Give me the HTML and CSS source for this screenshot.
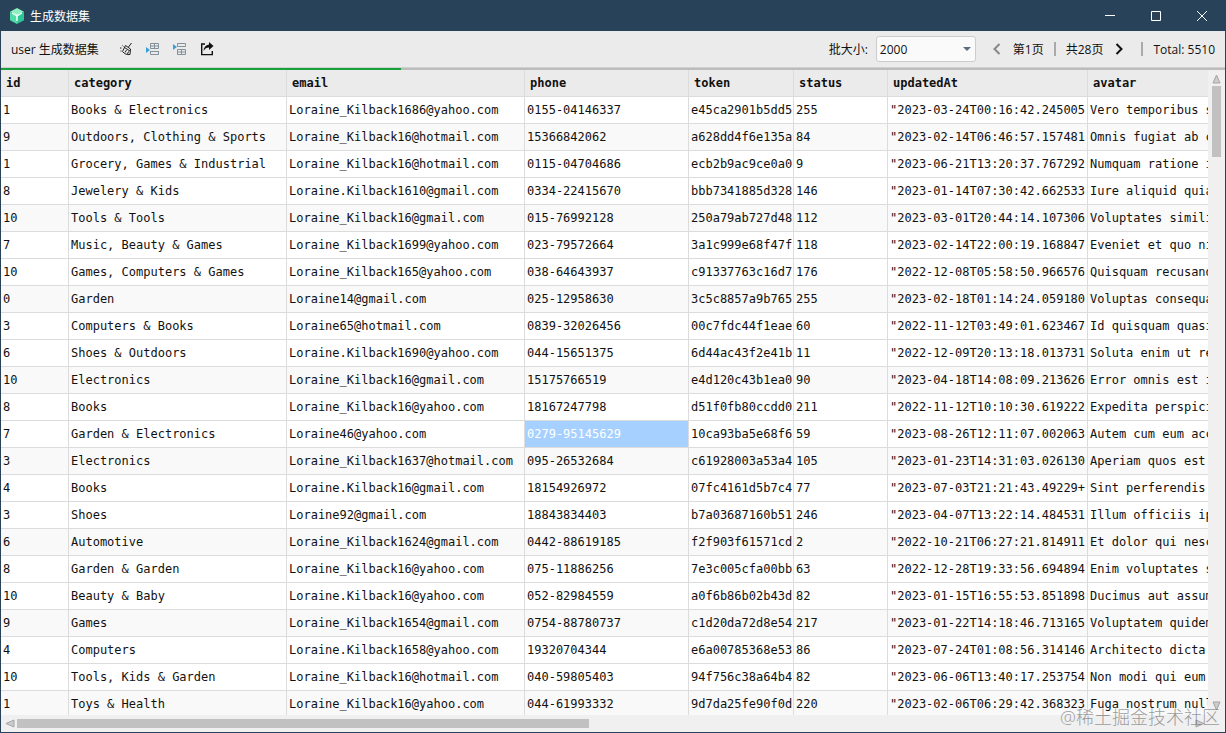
FILE: index.html
```html
<!DOCTYPE html>
<html lang="zh-CN">
<head>
    <meta charset="UTF-8">
    <title>生成数据集</title>
    <link rel="stylesheet" href="styles.css">
</head>
<body>

    <div class="window">
        <header class="titlebar">
            <svg class="logo" viewBox="0 0 16 16">
                <path fill="#8df0c0" d="M8 0l7 3.800L8 8 1 3.800z"/>
                <path fill="#4fdca6" d="M1 3.800L8 8v8l-7-3.800z"/>
                <path fill="#2fc596" d="M15 3.800L8 8v8l7-3.800z"/>
                <path fill="#ecfff6" d="M3 4.500l5 2.200 5-2.200v1.300L8.800 8.200V13H7.200V8.200L3 5.800z"/>
            </svg>
            <h1>生成数据集</h1>
            <div class="window-buttons">
                <button type="button" aria-label="最小化"><svg viewBox="0 0 12 12"><path d="M1 5.500h10"/></svg></button>
                <button type="button" aria-label="最大化"><svg viewBox="0 0 12 12"><path d="M1.500 1.500h9v9h-9z"/></svg></button>
                <button type="button" aria-label="关闭"><svg viewBox="0 0 12 12"><path d="M1 1l10 10M11 1L1 11"/></svg></button>
            </div>
        </header>

        <div class="toolbar">
            <span class="table-name">user 生成数据集</span>
            <div class="actions">
                <button type="button" aria-label="清空">
                    <svg viewBox="0 0 14 14" fill="none" stroke="#222"><path d="M12.500 1L9.500 5M6.500 3.500l5 3.500-.5 5.500c-3 .5-5.500-.5-7.500-3zM5.500 5.500l5.500 3.500M6 10.500L7.500 8M8.500 12l1-2.500M1 6h1.500M1.500 9h1M3.500 3.500l1 1"/></svg>
                </button>
                <button type="button" aria-label="在上方插入行">
                    <svg viewBox="0 0 14 14" fill="none" stroke="#84909a"><path d="M4.500 1.500h8v5h-8zM8.500 1.500v5M4.500 4h8M4.500 9v3.500h8V9M4.500 9.500h8"/><path fill="#389fd6" stroke="none" d="M0 5l4 3-4 3z"/></svg>
                </button>
                <button type="button" aria-label="在下方插入行">
                    <svg viewBox="0 0 14 14" fill="none" stroke="#84909a"><path d="M4.500 1.500h8v3h-8zM4.500 7.500h8v5h-8zM8.500 7.500v5M4.500 10h8"/><path fill="#389fd6" stroke="none" d="M0 2l4 3-4 3z"/></svg>
                </button>
                <button type="button" aria-label="导出">
                    <svg viewBox="0 0 14 14" fill="none" stroke="#111" stroke-width="1.400"><path d="M5 2H1.700v10.600h10.600V9"/><path fill="#111" stroke="none" d="M9 0l4.500 4L9 8V5.500C6.500 5.500 5 6.500 3.500 9 3.700 5.500 5.500 3 9 2.500z"/></svg>
                </button>
            </div>
            <div class="pager">
                <label for="batch">批大小:</label>
                <div class="select-box">
                    <select id="batch">
                        <option>2000</option>
                    </select>
                </div>
                <button type="button" class="prev" aria-label="上一页"><svg viewBox="0 0 10 12"><path d="M7.500 1L2.500 6l5 5"/></svg></button>
                <span>第1页</span>
                <i class="divider"></i>
                <span>共28页</span>
                <button type="button" class="next" aria-label="下一页"><svg viewBox="0 0 10 12"><path d="M2.500 1l5 5-5 5"/></svg></button>
                <i class="divider"></i>
                <span>Total: 5510</span>
            </div>
        </div>

        <div class="progress"><div class="progress-bar"></div></div>

        <div class="main">
            <div class="table-wrap">
                <table>
                    <colgroup>
                        <col class="c-id"><col class="c-category"><col class="c-email"><col class="c-phone"><col class="c-token"><col class="c-status"><col class="c-updated"><col>
                    </colgroup>
                    <thead>
                        <tr><th>id</th><th>category</th><th>email</th><th>phone</th><th>token</th><th>status</th><th>updatedAt</th><th>avatar</th></tr>
                    </thead>
                    <tbody>
                        <tr><td>1</td><td>Books &amp; Electronics</td><td>Loraine_Kilback1686@yahoo.com</td><td>0155-04146337</td><td>e45ca2901b5dd5</td><td>255</td><td>"2023-03-24T00:16:42.245005</td><td>Vero temporibus s</td></tr>
                        <tr><td>9</td><td>Outdoors, Clothing &amp; Sports</td><td>Loraine_Kilback16@hotmail.com</td><td>15366842062</td><td>a628dd4f6e135a</td><td>84</td><td>"2023-02-14T06:46:57.157481</td><td>Omnis fugiat ab c</td></tr>
                        <tr><td>1</td><td>Grocery, Games &amp; Industrial</td><td>Loraine_Kilback16@hotmail.com</td><td>0115-04704686</td><td>ecb2b9ac9ce0a0</td><td>9</td><td>"2023-06-21T13:20:37.767292</td><td>Numquam ratione i</td></tr>
                        <tr><td>8</td><td>Jewelery &amp; Kids</td><td>Loraine.Kilback1610@gmail.com</td><td>0334-22415670</td><td>bbb7341885d328</td><td>146</td><td>"2023-01-14T07:30:42.662533</td><td>Iure aliquid quia</td></tr>
                        <tr><td>10</td><td>Tools &amp; Tools</td><td>Loraine_Kilback16@gmail.com</td><td>015-76992128</td><td>250a79ab727d48</td><td>112</td><td>"2023-03-01T20:44:14.107306</td><td>Voluptates simili</td></tr>
                        <tr><td>7</td><td>Music, Beauty &amp; Games</td><td>Loraine_Kilback1699@yahoo.com</td><td>023-79572664</td><td>3a1c999e68f47f</td><td>118</td><td>"2023-02-14T22:00:19.168847</td><td>Eveniet et quo ni</td></tr>
                        <tr><td>10</td><td>Games, Computers &amp; Games</td><td>Loraine_Kilback165@yahoo.com</td><td>038-64643937</td><td>c91337763c16d7</td><td>176</td><td>"2022-12-08T05:58:50.966576</td><td>Quisquam recusand</td></tr>
                        <tr><td>0</td><td>Garden</td><td>Loraine14@gmail.com</td><td>025-12958630</td><td>3c5c8857a9b765</td><td>255</td><td>"2023-02-18T01:14:24.059180</td><td>Voluptas consequa</td></tr>
                        <tr><td>3</td><td>Computers &amp; Books</td><td>Loraine65@hotmail.com</td><td>0839-32026456</td><td>00c7fdc44f1eae</td><td>60</td><td>"2022-11-12T03:49:01.623467</td><td>Id quisquam quasi</td></tr>
                        <tr><td>6</td><td>Shoes &amp; Outdoors</td><td>Loraine.Kilback1690@yahoo.com</td><td>044-15651375</td><td>6d44ac43f2e41b</td><td>11</td><td>"2022-12-09T20:13:18.013731</td><td>Soluta enim ut re</td></tr>
                        <tr><td>10</td><td>Electronics</td><td>Loraine_Kilback16@gmail.com</td><td>15175766519</td><td>e4d120c43b1ea0</td><td>90</td><td>"2023-04-18T14:08:09.213626</td><td>Error omnis est i</td></tr>
                        <tr><td>8</td><td>Books</td><td>Loraine_Kilback16@yahoo.com</td><td>18167247798</td><td>d51f0fb80ccdd0</td><td>211</td><td>"2022-11-12T10:10:30.619222</td><td>Expedita perspici</td></tr>
                        <tr><td>7</td><td>Garden &amp; Electronics</td><td>Loraine46@yahoo.com</td><td class="selected">0279-95145629</td><td>10ca93ba5e68f6</td><td>59</td><td>"2023-08-26T12:11:07.002063</td><td>Autem cum eum acc</td></tr>
                        <tr><td>3</td><td>Electronics</td><td>Loraine_Kilback1637@hotmail.com</td><td>095-26532684</td><td>c61928003a53a4</td><td>105</td><td>"2023-01-23T14:31:03.026130</td><td>Aperiam quos est</td></tr>
                        <tr><td>4</td><td>Books</td><td>Loraine.Kilback16@gmail.com</td><td>18154926972</td><td>07fc4161d5b7c4</td><td>77</td><td>"2023-07-03T21:21:43.49229+</td><td>Sint perferendis</td></tr>
                        <tr><td>3</td><td>Shoes</td><td>Loraine92@gmail.com</td><td>18843834403</td><td>b7a03687160b51</td><td>246</td><td>"2023-04-07T13:22:14.484531</td><td>Illum officiis ip</td></tr>
                        <tr><td>6</td><td>Automotive</td><td>Loraine_Kilback1624@gmail.com</td><td>0442-88619185</td><td>f2f903f61571cd</td><td>2</td><td>"2022-10-21T06:27:21.814911</td><td>Et dolor qui nesc</td></tr>
                        <tr><td>8</td><td>Garden &amp; Garden</td><td>Loraine_Kilback16@yahoo.com</td><td>075-11886256</td><td>7e3c005cfa00bb</td><td>63</td><td>"2022-12-28T19:33:56.694894</td><td>Enim voluptates s</td></tr>
                        <tr><td>10</td><td>Beauty &amp; Baby</td><td>Loraine.Kilback16@yahoo.com</td><td>052-82984559</td><td>a0f6b86b02b43d</td><td>82</td><td>"2023-01-15T16:55:53.851898</td><td>Ducimus aut assum</td></tr>
                        <tr><td>9</td><td>Games</td><td>Loraine_Kilback1654@gmail.com</td><td>0754-88780737</td><td>c1d20da72d8e54</td><td>217</td><td>"2023-01-22T14:18:46.713165</td><td>Voluptatem quidem</td></tr>
                        <tr><td>4</td><td>Computers</td><td>Loraine.Kilback1658@yahoo.com</td><td>19320704344</td><td>e6a00785368e53</td><td>86</td><td>"2023-07-24T01:08:56.314146</td><td>Architecto dicta</td></tr>
                        <tr><td>10</td><td>Tools, Kids &amp; Garden</td><td>Loraine_Kilback16@hotmail.com</td><td>040-59805403</td><td>94f756c38a64b4</td><td>82</td><td>"2023-06-06T13:40:17.253754</td><td>Non modi qui eum</td></tr>
                        <tr><td>1</td><td>Toys &amp; Health</td><td>Loraine_Kilback16@yahoo.com</td><td>044-61993332</td><td>9d7da25fe90f0d</td><td>220</td><td>"2023-02-06T06:29:42.368323</td><td>Fuga nostrum null</td></tr>
                    </tbody>
                </table>
            </div>
            <div class="scroll-y">
                <svg viewBox="0 0 9 10"><path d="M4.500 1L8 9H1z"/></svg>
                <div class="track"><div class="thumb"></div></div>
                <svg viewBox="0 0 9 10"><path d="M4.500 9L8 1H1z"/></svg>
            </div>
        </div>

        <div class="scroll-x">
            <svg viewBox="0 0 10 9"><path d="M1 4.500L9 1v7z"/></svg>
            <div class="track"><div class="thumb"></div></div>
            <svg viewBox="0 0 10 9"><path d="M9 4.500L1 1v7z"/></svg>
        </div>

        <div class="watermark">@稀土掘金技术社区</div>
    </div>

</body>
</html>
```
FILE: styles.css
```css
* {
    box-sizing: border-box;
}

body {
    margin: 0;
    font-family: "Open Sans", "Noto Sans CJK SC", sans-serif;
    font-size: 12px;
    color: #111;
}

button {
    padding: 0;
    border: none;
    background: none;
    display: flex;
    align-items: center;
    justify-content: center;
}

.window {
    position: relative;
    display: flex;
    flex-direction: column;
    height: 100vh;
    border: 1px solid #284359;
    border-top: none;
    overflow: hidden;
    background-color: #f0f0f0;
}

/* title bar */
.titlebar {
    display: flex;
    align-items: center;
    height: 31px;
    flex-shrink: 0;
    padding-left: 8px;
    background-color: #284359;
    color: #fff;
}

.logo {
    width: 16px;
    height: 16px;
}

.titlebar h1 {
    margin: 0 0 0 5px;
    font-size: 12px;
    font-weight: normal;
}

.window-buttons {
    display: flex;
    margin-left: auto;
}

.window-buttons button {
    width: 46px;
    height: 31px;
}

.window-buttons svg {
    width: 12px;
    height: 12px;
    fill: none;
    stroke: #fff;
}

/* toolbar */
.toolbar {
    display: flex;
    align-items: center;
    height: 36px;
    flex-shrink: 0;
    padding: 0 10px;
    background-color: #ebebeb;
}

.actions {
    display: flex;
    gap: 13px;
    margin-left: 20px;
}

.actions svg {
    display: block;
    width: 14px;
    height: 14px;
}

.pager {
    display: flex;
    align-items: center;
    margin-left: auto;
}

.select-box {
    position: relative;
    margin: 0 16px 0 8px;
}

.select-box select {
    appearance: none;
    display: block;
    width: 100px;
    height: 26px;
    padding: 0 3px;
    border: 1px solid #ccc;
    border-radius: 3px;
    background-color: #fafafa;
    font: inherit;
    color: inherit;
}

.select-box::after {
    content: "";
    position: absolute;
    right: 5px;
    top: 11px;
    border: 4px solid transparent;
    border-top-color: #5b6b82;
    border-bottom: none;
    pointer-events: none;
}

.pager button svg {
    width: 10px;
    height: 12px;
    fill: none;
    stroke: #111;
    stroke-width: 2;
}

.pager .prev {
    margin-right: 11px;
}

.pager .prev svg {
    stroke: #888;
}

.pager .next {
    margin: 0 7px 0 11px;
}

.divider {
    width: 2px;
    height: 14px;
    margin: 0 10px;
    background-color: #aaa;
}

.progress {
    height: 3px;
    flex-shrink: 0;
    border-top: 1px solid #d0d0d0;
    background-color: #bcbcbc;
}

.progress-bar {
    width: 400px;
    height: 2px;
    background-color: #18a23c;
}

/* data grid */
.main {
    display: flex;
    flex: 1;
    min-height: 0;
}

.table-wrap {
    flex: 1;
    min-width: 0;
    overflow: hidden;
    background-color: #fff;
}

table {
    width: 100%;
    table-layout: fixed;
    border-collapse: separate;
    border-spacing: 0;
    font-family: "DejaVu Sans Mono", "Liberation Mono", monospace;
    font-size: 12px;
}

.c-id { width: 68px; }
.c-category { width: 218px; }
.c-email { width: 238px; }
.c-phone { width: 164px; }
.c-token { width: 105px; }
.c-status { width: 94px; }
.c-updated { width: 200px; }

th,
td {
    height: 27px;
    padding: 0 0 0 2px;
    border-right: 1px solid #dcdcdc;
    border-bottom: 1px solid #dcdcdc;
    line-height: 26px;
    text-align: left;
    white-space: nowrap;
    overflow: hidden;
}

th {
    padding-left: 5px;
    background-color: #ebebeb;
}

th:last-child,
td:last-child {
    border-right: none;
}

tbody tr:nth-child(3n+2) {
    background-color: #f9f9f9;
}

td.selected {
    background-color: #a6d0ff;
    color: #fff;
}

/* scrollbars */
.scroll-y {
    display: flex;
    flex-direction: column;
    align-items: center;
    width: 17px;
    padding: 4px 0;
}

.scroll-y svg {
    width: 9px;
    height: 10px;
}

.scroll-x svg {
    width: 10px;
    height: 9px;
}

.scroll-y svg,
.scroll-x svg {
    fill: #ccc;
    stroke: #a5a5a5;
}

.track {
    flex: 1;
}

.thumb {
    background-color: #c1c1c1;
}

.scroll-y .thumb {
    width: 9px;
    height: 71px;
    margin-top: 2px;
}

.scroll-x {
    display: flex;
    align-items: center;
    height: 17px;
    flex-shrink: 0;
    padding: 0 20px 0 4px;
}

.scroll-x .thumb {
    width: 572px;
    height: 9px;
    margin-left: 2px;
}

.watermark {
    position: absolute;
    right: 5px;
    bottom: 3px;
    font-size: 18px;
    font-weight: 300;
    line-height: 24px;
    color: rgba(90, 90, 90, 0.6);
}
```
